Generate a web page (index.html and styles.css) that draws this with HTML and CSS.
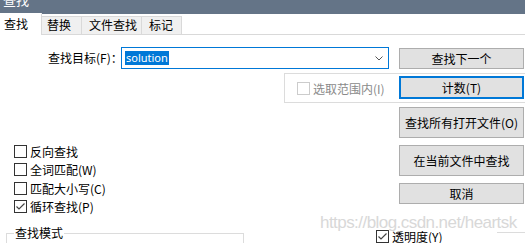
FILE: index.html
```html
<!DOCTYPE html>
<html>
<head>
<meta charset="utf-8">
<link rel="stylesheet" href="styles.css">
</head>
<body>
<div class="win">
  <div class="titlebar"><span class="title">查找</span></div>
  <div class="tabs">
    <div class="tab active">查找</div>
    <div class="tab t2">替换</div>
    <div class="tab t3">文件查找</div>
    <div class="tab t4">标记</div>
  </div>

  <div class="row-target">
    <label class="target-label">查找目标(F)：</label>
    <div class="combo">
      <span class="sel">solution</span>
      <svg class="chev" width="8" height="5" viewBox="0 0 8 5"><polyline points="0.5,0.5 4,4 7.5,0.5" fill="none" stroke="#555" stroke-width="1"/></svg>
    </div>
    <button class="btn">查找下一个</button>
  </div>

  <div class="scope">
    <label class="chk disabled"><span class="box"></span>选取范围内(I)</label>
    <button class="btn default">计数(T)</button>
  </div>

  <div class="main">
    <div class="options">
      <label class="chk"><span class="box"></span>反向查找</label>
      <label class="chk"><span class="box"></span>全词匹配(W)</label>
      <label class="chk"><span class="box"></span>匹配大小写(C)</label>
      <label class="chk"><span class="box"><svg width="11" height="11" viewBox="0 0 11 11"><polyline points="1.5,5.5 4,8 9.5,2.5" fill="none" stroke="#444" stroke-width="1.2"/></svg></span>循环查找(P)</label>
    </div>
    <div class="actions">
      <button class="btn tall">查找所有打开文件(O)</button>
      <button class="btn tall">在当前文件中查找</button>
      <button class="btn">取消</button>
    </div>
  </div>

  <div class="bottom">
    <div class="group"><span class="legend">查找模式</span></div>
    <label class="chk trans"><span class="box"><svg width="11" height="11" viewBox="0 0 11 11"><polyline points="1.5,5.5 4,8 9.5,2.5" fill="none" stroke="#444" stroke-width="1.2"/></svg></span>透明度(Y)</label>
    <div class="group-line"></div>
  </div>

  <div class="watermark">https://blog.csdn.net/heartsk</div>
</div>
</body>
</html>
```

FILE: styles.css
```css
* {
  box-sizing: border-box;
  margin: 0;
  padding: 0;
}

html, body {
  width: 525px;
  height: 243px;
  overflow: hidden;
  background: #ffffff;
}

body {
  font-family: "Noto Sans CJK SC", "Noto Sans", sans-serif;
  font-size: 12px;
  color: #000;
}

.win {
  position: relative;
  width: 525px;
  height: 243px;
  overflow: hidden;
}

/* title bar */
.titlebar {
  height: 14px;
  background: #647487;
  overflow: hidden;
  padding-left: 3px;
}

.title {
  display: block;
  color: #fff;
  font-size: 13px;
  line-height: 13px;
  margin-top: -7px;
}

/* tabs */
.tabs {
  display: flex;
  align-items: flex-end;
  height: 21px;
  border-bottom: 1px solid #d9d9d9;
}

.tab {
  height: 18px;
  line-height: 15px;
  background: #f0f0f0;
  border: 1px solid #d9d9d9;
  border-bottom: none;
  margin-left: -1px;
  padding-left: 5px;
  white-space: nowrap;
}

.tab.active {
  width: 42px;
  height: 22px;
  margin-left: 0;
  margin-bottom: -1px;
  background: #fff;
  border-color: #fff;
  border-right: 1px solid #d9d9d9;
  padding-left: 3px;
  padding-top: 2px;
}

.tab.t2 { width: 41px; }
.tab.t3 { width: 61px; padding-left: 7px; }
.tab.t4 { width: 41px; padding-left: 7px; }

/* buttons */
.btn {
  display: flex;
  align-items: center;
  justify-content: center;
  width: 125px;
  height: 21px;
  background: #e1e1e1;
  border: 1px solid #adadad;
  font-family: inherit;
  font-size: 12px;
  color: #000;
  white-space: nowrap;
}

.btn.tall {
  height: 31px;
}

.btn.default {
  height: 23px;
  border: 2px solid #0078d7;
  margin-top: 2px;
}

/* target row */
.row-target {
  display: flex;
  align-items: flex-start;
  margin-top: 12px;
  height: 22px;
}

.target-label {
  width: 73px;
  margin-left: 48px;
  line-height: 22px;
  white-space: nowrap;
}

.combo {
  display: flex;
  align-items: center;
  width: 268px;
  height: 22px;
  border: 1px solid #0078d7;
  padding-left: 3px;
  padding-right: 5px;
}

.sel {
  display: inline-block;
  font-family: "Noto Sans", sans-serif;
  font-size: 11px;
  line-height: 14px;
  height: 14px;
  padding: 0 1px;
  background: #0078d7;
  color: #fff;
}

.chev {
  margin-left: auto;
  margin-top: 1px;
}

.row-target .btn {
  margin-left: 10px;
  margin-top: 1px;
}

/* scope group */
.scope {
  display: flex;
  align-items: flex-start;
  margin-top: 4px;
  margin-left: 284px;
  width: 260px;
  height: 30px;
  border: 1px solid #dcdcdc;
  padding-left: 12px;
}

.scope .chk {
  width: 102px;
  height: 28px;
  color: #8a8a8a;
}

/* checkboxes */
.chk {
  display: flex;
  align-items: center;
  height: 18.5px;
  white-space: nowrap;
}

.box {
  display: flex;
  align-items: center;
  justify-content: center;
  width: 13px;
  height: 13px;
  border: 1px solid #333;
  background: #fff;
  margin-right: 3px;
  flex: none;
}

.chk.disabled .box {
  border-color: #cccccc;
}

/* main area */
.main {
  display: flex;
  align-items: flex-start;
}

.options {
  width: 399px;
  padding-top: 39px;
  padding-left: 14px;
}

.actions {
  display: flex;
  flex-direction: column;
  gap: 7px;
  margin-top: 4px;
}

/* bottom */
.bottom {
  display: flex;
  align-items: flex-start;
}

.group {
  margin-left: 6px;
  margin-top: 17px;
  width: 238px;
  height: 30px;
  border: 1px solid #dcdcdc;
  border-bottom: none;
}

.legend {
  display: block;
  width: fit-content;
  margin-left: 7px;
  margin-top: -8px;
  padding: 0 1px;
  line-height: 14px;
  background: #fff;
}

.chk.trans {
  margin-left: 132px;
  margin-top: 13px;
  height: 14px;
}

.group-line {
  margin-left: auto;
  margin-top: 16px;
  width: 28px;
  height: 1px;
  background: #dcdcdc;
}

.watermark {
  position: absolute;
  left: 320px;
  top: 213px;
  font-family: "Liberation Sans", Arial, sans-serif;
  font-size: 17px;
  letter-spacing: -0.55px;
  color: #d8d8d8;
  text-shadow: 0 0 2px #fff;
  white-space: nowrap;
}
```
